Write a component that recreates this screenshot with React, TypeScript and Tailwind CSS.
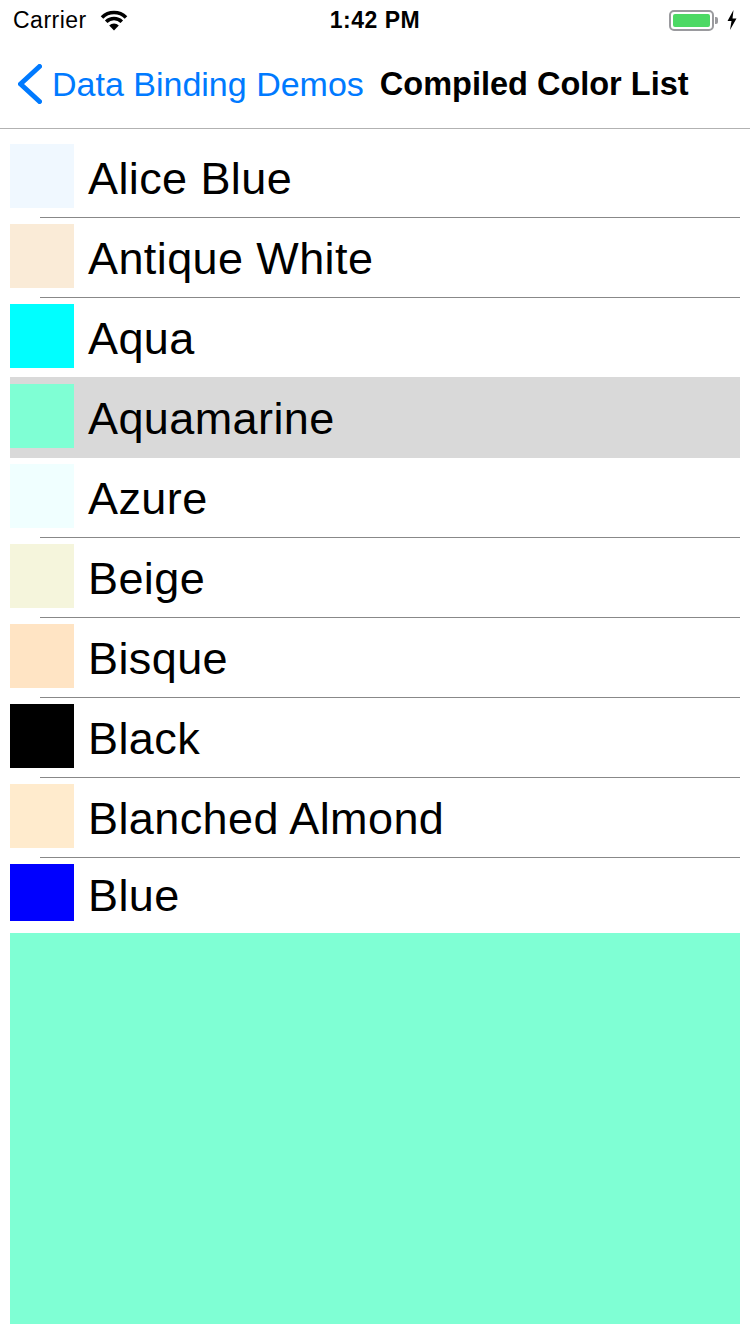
import React from 'react';

const COLORS = [
  { name: 'Alice Blue', hex: '#f0f8ff' },
  { name: 'Antique White', hex: '#faebd7' },
  { name: 'Aqua', hex: '#00ffff' },
  { name: 'Aquamarine', hex: '#7fffd4' },
  { name: 'Azure', hex: '#f0ffff' },
  { name: 'Beige', hex: '#f5f5dc' },
  { name: 'Bisque', hex: '#ffe4c4' },
  { name: 'Black', hex: '#000000' },
  { name: 'Blanched Almond', hex: '#ffebcd' },
  { name: 'Blue', hex: '#0000ff' },
];

const SELECTED = 3;

const Wifi = () => (
  <svg width="28" height="21" viewBox="0 0 28 21" className="ml-[13px]">
    <path d="M2 7.5 A17 17 0 0 1 26 7.5" fill="none" stroke="#000" strokeWidth="3.6" />
    <path d="M6.2 11.7 A11 11 0 0 1 21.8 11.7" fill="none" stroke="#000" strokeWidth="3.6" />
    <path d="M14 20.5 L9.2 15.6 A6.8 6.8 0 0 1 18.8 15.6 Z" fill="#000" />
  </svg>
);

const StatusBar = () => (
  <div className="h-[40px] grid grid-cols-3 items-center px-[13px]" style={{ fontFamily: '"Liberation Sans", Arial, sans-serif' }}>
    <div className="flex items-center">
      <span className="text-[23px] tracking-[0.5px] text-black leading-none">Carrier</span>
      <Wifi />
    </div>
    <div className="flex justify-center">
      <span className="text-[23px] font-bold text-black leading-none tracking-[0.5px]">1:42 PM</span>
    </div>
    <div className="flex items-center justify-end pr-[0px]">
      <div className="w-[45px] h-[21px] rounded-[5px] border-2 border-[#9a9a9e] p-[2px]">
        <div className="w-full h-full rounded-[2px] bg-[#4cd964]" />
      </div>
      <div className="w-[3px] h-[7px] rounded-r-[2px] bg-[#9a9a9e] ml-[1px]" />
      <svg width="10" height="20" viewBox="0 0 10 20" className="ml-[9px]">
        <path d="M6.5 0 L0.5 11 L4.5 11 L3 20 L9.5 8.5 L5.5 8.5 Z" fill="#000" />
      </svg>
    </div>
  </div>
);

const NavBar = () => (
  <div className="h-[89px] flex items-center border-b border-[#b2b2b2]" style={{ fontFamily: '"Liberation Sans", Arial, sans-serif' }}>
    <svg width="24" height="40" viewBox="0 0 24 40" className="ml-[18px]">
      <polyline points="21.5,2.5 2.5,20 21.5,37.5" fill="none" stroke="#007aff" strokeWidth="5" strokeLinecap="round" strokeLinejoin="round" />
    </svg>
    <span className="ml-[10px] text-[34px] leading-none text-[#007aff]">Data Binding Demos</span>
    <span className="ml-[16px] text-[32.5px] leading-none font-bold text-black">Compiled Color List</span>
  </div>
);

const Row = ({ name, hex, index }: { name: string; hex: string; index: number }) => {
  const last = index === COLORS.length - 1;
  const selected = index === SELECTED;
  const noSep = last || index === SELECTED - 1 || selected;
  return (
    <div className={selected ? 'bg-[#d9d9d9] -mt-px pt-px' : ''}>
      <div className={`flex items-start ${last ? 'h-[75px]' : 'h-[79px]'}`}>
        <div className={`w-[64px] mt-[6px] ${last ? 'h-[57px]' : 'h-[64px]'}`} style={{ backgroundColor: hex }} />
        <span className={`ml-[14px] text-[45px] leading-[45px] tracking-[0.4px] text-black ${last ? 'mt-[15px]' : 'mt-[18px]'}`}>{name}</span>
      </div>
      {!last && <div className={`h-px ml-[30px] ${noSep ? 'bg-transparent' : 'bg-[#888888]'}`} />}
    </div>
  );
};

export default function App() {
  return (
    <div className="w-[750px] h-[1334px] bg-white flex flex-col overflow-hidden">
      <StatusBar />
      <NavBar />
      <div className="flex-1 flex flex-col px-[10px] pt-[9px] pb-[10px]" style={{ fontFamily: '"Liberation Sans", Arial, sans-serif' }}>
        <div className="flex flex-col">
          {COLORS.map((c, i) => (
            <Row key={c.name} name={c.name} hex={c.hex} index={i} />
          ))}
        </div>
        <div className="flex-1 bg-[#7fffd4]" />
      </div>
    </div>
  );
}
